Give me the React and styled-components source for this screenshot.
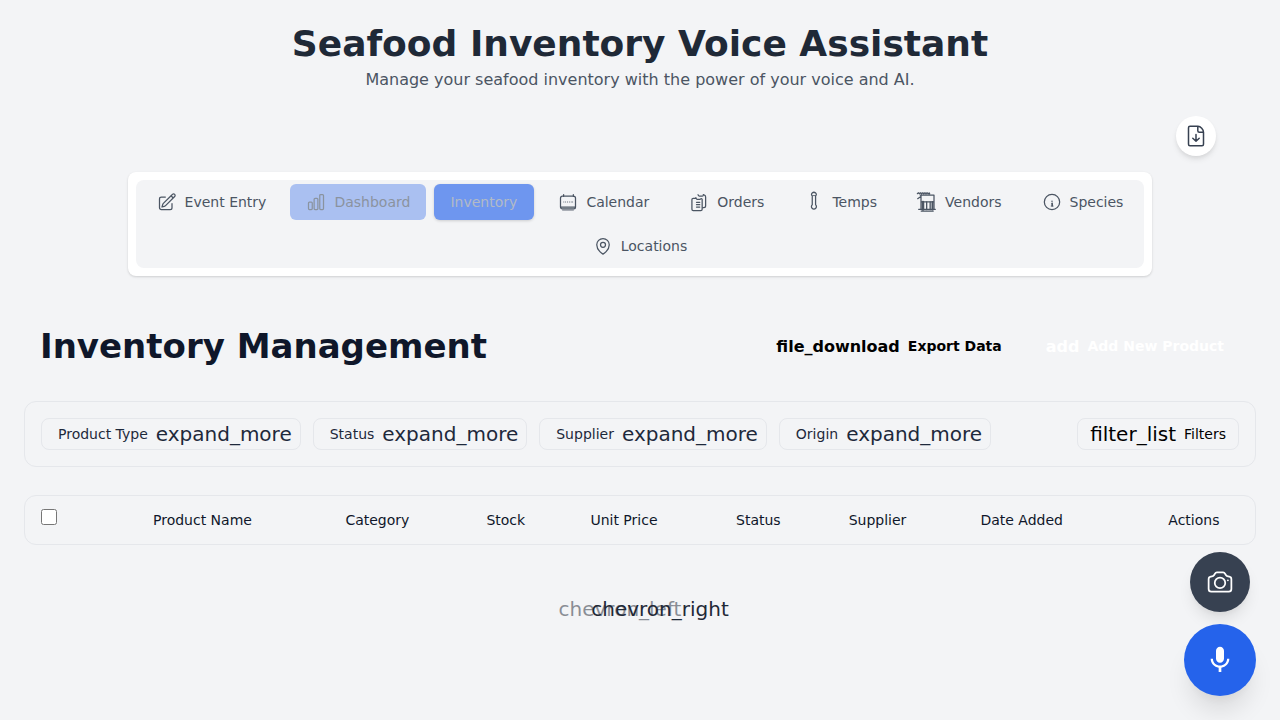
// Inventory page of the seafood voice assistant

import { styled, createGlobalStyle } from "styled-components";

const GlobalStyle = createGlobalStyle`
  *, *::before, *::after {
    box-sizing: border-box;
  }
  body {
    margin: 0;
    background-color: #f3f4f6;
    color: #1f2937;
    font-family: "DejaVu Sans", sans-serif;
    font-size: 16px;
    line-height: 24px;
  }
  h1, h2, p {
    margin: 0;
  }
  button {
    padding: 0;
    border: 0;
    background: none;
    color: inherit;
    font: inherit;
    cursor: pointer;
  }
`;

const Page = styled.div`
  padding: 24px;
`;
const Header = styled.header`
  text-align: center;
`;
const Title = styled.h1`
  font-size: 36px;
  line-height: 40px;
  font-weight: 700;
`;
const Subtitle = styled.p`
  margin-top: 4px;
  color: #4b5563;
`;
const Toolbar = styled.div`
  display: flex;
  justify-content: flex-end;
  padding: 24px 40px 16px;
`;
const RoundButton = styled.button`
  display: flex;
  align-items: center;
  justify-content: center;
  width: ${props => props.$size}px;
  height: ${props => props.$size}px;
  border-radius: 50%;
  background-color: ${props => props.$bg};
  color: ${props => props.$color};
  box-shadow: ${props => props.$shadow};
`;
const NavCard = styled.nav`
  max-width: 1024px;
  margin: 0 auto;
  padding: 8px;
  border-radius: 8px;
  background-color: white;
  box-shadow: 0 1px 3px rgba(0, 0, 0, 0.1), 0 1px 2px rgba(0, 0, 0, 0.06);
`;
const NavList = styled.div`
  display: flex;
  flex-wrap: wrap;
  justify-content: center;
  gap: 8px;
  padding: 4px;
  border-radius: 8px;
  background-color: #f3f4f6;
`;
const tabColors = {
  idle: { bg: "transparent", color: "#4b5563", shadow: "none" },
  fading: { bg: "#aac0f1", color: "#8a939f", shadow: "none" },
  active: { bg: "#6e96ef", color: "#b2bac6", shadow: "0 1px 3px rgba(0, 0, 0, 0.16)" },
};
const Tab = styled.button`
  display: flex;
  align-items: center;
  gap: 8px;
  min-width: 100px;
  padding: 8px 16px;
  border-radius: 6px;
  font-size: 14px;
  line-height: 20px;
  background-color: ${props => tabColors[props.$state].bg};
  color: ${props => tabColors[props.$state].color};
  box-shadow: ${props => tabColors[props.$state].shadow};
`;
const HeadingRow = styled.div`
  display: flex;
  align-items: center;
  justify-content: space-between;
  margin-top: 32px;
  padding: 16px;
`;
const Heading = styled.h2`
  color: #0f172a;
  font-size: 34px;
  line-height: 45px;
  font-weight: 700;
`;
const Actions = styled.div`
  display: flex;
  gap: 12px;
`;
const ActionButton = styled.button`
  display: flex;
  align-items: center;
  gap: 8px;
  height: 40px;
  padding: 0 16px;
  color: ${props => props.$color};
  font-size: 14px;
  line-height: 21px;
  font-weight: 700;
`;
const ActionIcon = styled.span`
  font-size: 16px;
  line-height: 24px;
`;
const FilterCard = styled.div`
  display: flex;
  align-items: center;
  justify-content: space-between;
  margin-top: 16px;
  padding: 16px;
  border: 1px solid #e5e7eb;
  border-radius: 12px;
`;
const FilterGroup = styled.div`
  display: flex;
  gap: 12px;
`;
const FilterButton = styled.button`
  display: flex;
  align-items: center;
  gap: 8px;
  height: 32px;
  padding: ${props => (props.$wide ? "0 12px" : "0 8px 0 16px")};
  border: 1px solid #e5e7eb;
  border-radius: 8px;
  color: ${props => (props.$wide ? "black" : "#1e293b")};
  font-size: 14px;
`;
const Symbol = styled.span`
  font-size: 20px;
`;
const TableCard = styled.div`
  margin-top: 28px;
  border: 1px solid #e5e7eb;
  border-radius: 12px;
`;
const Table = styled.table`
  width: 100%;
  border-collapse: collapse;
  color: #0f172a;
  font-size: 14px;
  line-height: 20px;
`;
const Th = styled.th`
  padding: 14px 16px;
  font-weight: 400;
  text-align: ${props => props.$align || "left"};
`;
const CheckTh = styled.th`
  width: 112px;
  padding: 13px 16px;
  text-align: left;
  vertical-align: top;
`;
const Check = styled.input`
  display: block;
  width: 16px;
  height: 16px;
  margin: 0;
`;
const Pager = styled.div`
  display: flex;
  justify-content: center;
  margin-top: 44px;
`;
const PageButton = styled.button`
  display: flex;
  align-items: center;
  justify-content: center;
  width: 40px;
  height: 40px;
  font-size: 20px;
  opacity: ${props => (props.disabled ? 0.5 : 1)};
`;
const Floating = styled.div`
  position: fixed;
  right: 24px;
  bottom: 24px;
  display: flex;
  flex-direction: column;
  align-items: center;
  gap: 12px;
`;

function Icon({ size = 20, width = 1.5, children }) {
  return (
    <svg
      width={size}
      height={size}
      viewBox="0 0 24 24"
      fill="none"
      stroke="currentColor"
      strokeWidth={width}
      strokeLinecap="round"
      strokeLinejoin="round"
      overflow="visible"
      aria-hidden="true"
    >
      {children}
    </svg>
  );
}

const icons = {
  edit: (
    <path d="m16.862 4.487 1.687-1.688a1.875 1.875 0 1 1 2.652 2.652L10.582 16.07a4.5 4.5 0 0 1-1.897 1.13L6 18l.8-2.685a4.5 4.5 0 0 1 1.13-1.897l8.932-8.931Zm0 0L19.5 7.125M18 14v4.75A2.25 2.25 0 0 1 15.75 21H5.25A2.25 2.25 0 0 1 3 18.75V8.25A2.25 2.25 0 0 1 5.25 6H10" />
  ),
  chart: (
    <path d="M3 13.125C3 12.504 3.504 12 4.125 12h2.25c.621 0 1.125.504 1.125 1.125v6.75C7.5 20.496 6.996 21 6.375 21h-2.25A1.125 1.125 0 0 1 3 19.875v-6.75ZM9.75 8.625c0-.621.504-1.125 1.125-1.125h2.25c.621 0 1.125.504 1.125 1.125v11.25c0 .621-.504 1.125-1.125 1.125h-2.25a1.125 1.125 0 0 1-1.125-1.125V8.625ZM16.5 4.125c0-.621.504-1.125 1.125-1.125h2.25C20.496 3 21 3.504 21 4.125v15.75c0 .621-.504 1.125-1.125 1.125h-2.25a1.125 1.125 0 0 1-1.125-1.125V4.125Z" />
  ),
  calendar: (
    <>
      <path d="M6.75 3v2.25M18.4 3v2.25M3 18V7.2A2.2 2.2 0 0 1 5.2 5h13.6A2.2 2.2 0 0 1 21 7.2V18M3 18h18M3 18a2.25 2.25 0 0 0 2.25 2.25h13.5A2.25 2.25 0 0 0 21 18" />
      <path d="M5.5 21.8h13" strokeWidth="0.8" />
      <path d="M7 12h.01M9.2 12h.01M11.4 12h.01M13.6 12h.01M15.8 12h.01M17.6 12h.01" strokeWidth="1.2" />
    </>
  ),
  orders: (
    <>
      <path d="M9 12.3h3.9M9 15.2h3.9M9 18h3.9" />
      <path d="M16.5 18.8h1.2a2.25 2.25 0 0 0 2.25-2.25V6.1c0-1.4-.8-2.3-1.9-2.6l-.9-.4M10.8 3.3c.5 1.2.9 1.7 1.7 1.7h3.4c.9 0 1.3-.6 1.4-1.7M8.25 7.5v-.9" />
      <path d="M8.3 7.5H5.1c-.9 0-1.6.7-1.6 1.6v11.6c0 .9.7 1.6 1.6 1.6h9.1c.9 0 1.6-.7 1.6-1.6V9.1c0-.6-.4-1.1-1-1.1-.9 0-1.2.9-2.2.9H9.8c-.9 0-.9-1.4-1.5-1.4Z" />
    </>
  ),
  temps: (
    <>
      <path d="M9.9 4.6a2.9 2.4 0 1 1 4 0v10.6a3 3 0 1 1-4 0V4.6Z" />
      <path d="M10.6 4.3h2.7" strokeWidth="1" />
    </>
  ),
  vendors: (
    <>
      <path d="M.4 2l1.3-1 1.3 1.2 1.3-1.2 1.3 1.2 1.3-1.2 1.3 1.2 1.3-1.2 1.3 1.2 1.3-1.2 1.3 1.2 1.3-1 .5 1M4 3.8h16.4v17M4.8 3.8v17M.8 8l3.4-2.4M4.8 11.8h15.6M2 20.8h20M5 22.8h14.5" />
      <path d="M7.1 12v9" strokeWidth="3.2" />
      <path d="M11.6 12v9M15.8 12v9" strokeWidth="1.6" />
      <path d="M18.6 12v9" strokeWidth="2.4" />
    </>
  ),
  species: (
    <>
      <circle cx="12" cy="12" r="9.2" />
      <path d="M12 11h.01" strokeWidth="1.8" />
      <path d="M12.2 13.6v3" strokeWidth="2" />
      <path d="M11 16.9h2.4" strokeWidth="1" />
    </>
  ),
  pin: (
    <path d="M15 10.5a3 3 0 1 1-6 0 3 3 0 0 1 6 0ZM19.5 10.5c0 7.142-7.5 11.25-7.5 11.25S4.5 17.642 4.5 10.5a7.5 7.5 0 1 1 15 0Z" />
  ),
};

const tabs = [
  { label: "Event Entry", icon: icons.edit },
  { label: "Dashboard", icon: icons.chart, state: "fading" },
  { label: "Inventory", state: "active" },
  { label: "Calendar", icon: icons.calendar },
  { label: "Orders", icon: icons.orders },
  { label: "Temps", icon: icons.temps },
  { label: "Vendors", icon: icons.vendors },
  { label: "Species", icon: icons.species },
  { label: "Locations", icon: icons.pin },
];
const filters = ["Product Type", "Status", "Supplier", "Origin"];
const columns = ["Product Name", "Category", "Stock", "Unit Price", "Status", "Supplier", "Date Added"];

function App() {
  return (
    <>
      <GlobalStyle />
      <Page>
        <Header>
          <Title>Seafood Inventory Voice Assistant</Title>
          <Subtitle>Manage your seafood inventory with the power of your voice and AI.</Subtitle>
        </Header>
        <Toolbar>
          <RoundButton
            $size={40}
            $bg="white"
            $color="#374151"
            $shadow="0 4px 6px -1px rgba(0, 0, 0, 0.1), 0 2px 4px -1px rgba(0, 0, 0, 0.06)"
            aria-label="Export"
          >
            <Icon size={24}>
              <path d="M19.5 8.2v12c0 .9-.6 1.5-1.5 1.5H6c-.9 0-1.5-.6-1.5-1.5V3.8c0-.9.6-1.5 1.5-1.5h8c2.6 0 5.5 3.2 5.5 5.9ZM13.8 2.3v4.4c0 .9.6 1.5 1.5 1.5h4.2M8.8 14.2l3.2 3.1 3.2-3.1M12 17.3v-6.8" />
            </Icon>
          </RoundButton>
        </Toolbar>
        <NavCard>
          <NavList>
            {tabs.map(tab => (
              <Tab key={tab.label} $state={tab.state || "idle"}>
                {tab.icon && <Icon>{tab.icon}</Icon>}
                {tab.label}
              </Tab>
            ))}
          </NavList>
        </NavCard>
        <main>
          <HeadingRow>
            <Heading>Inventory Management</Heading>
            <Actions>
              <ActionButton $color="black">
                <ActionIcon>file_download</ActionIcon>
                Export Data
              </ActionButton>
              <ActionButton $color="white">
                <ActionIcon>add</ActionIcon>
                Add New Product
              </ActionButton>
            </Actions>
          </HeadingRow>
          <FilterCard>
            <FilterGroup>
              {filters.map(name => (
                <FilterButton key={name}>
                  {name}
                  <Symbol>expand_more</Symbol>
                </FilterButton>
              ))}
            </FilterGroup>
            <FilterButton $wide>
              <Symbol>filter_list</Symbol>
              Filters
            </FilterButton>
          </FilterCard>
          <TableCard>
            <Table>
              <thead>
                <tr>
                  <CheckTh>
                    <Check type="checkbox" aria-label="Select all" />
                  </CheckTh>
                  {columns.map(name => (
                    <Th key={name}>{name}</Th>
                  ))}
                  <Th $align="center">Actions</Th>
                </tr>
              </thead>
            </Table>
          </TableCard>
          <Pager>
            <PageButton disabled>chevron_left</PageButton>
            <PageButton>chevron_right</PageButton>
          </Pager>
        </main>
      </Page>
      <Floating>
        <RoundButton
          $size={60}
          $bg="#374151"
          $color="white"
          $shadow="0 10px 15px -3px rgba(0, 0, 0, 0.1), 0 4px 6px -2px rgba(0, 0, 0, 0.05)"
          aria-label="Take photo"
        >
          <Icon size={28}>
            <path d="M6.827 6.175A2.31 2.31 0 0 1 5.186 7.23c-.38.054-.757.112-1.134.175C2.999 7.58 2.25 8.507 2.25 9.574V18a2.25 2.25 0 0 0 2.25 2.25h15A2.25 2.25 0 0 0 21.75 18V9.574c0-1.067-.75-1.994-1.802-2.169a47.865 47.865 0 0 0-1.134-.175 2.31 2.31 0 0 1-1.64-1.055l-.822-1.316a2.192 2.192 0 0 0-1.736-1.039 48.774 48.774 0 0 0-5.232 0 2.192 2.192 0 0 0-1.736 1.039l-.821 1.316ZM16.5 12.75a4.5 4.5 0 1 1-9 0 4.5 4.5 0 0 1 9 0ZM18.75 10.5h.008v.008h-.008V10.5Z" />
          </Icon>
        </RoundButton>
        <RoundButton
          $size={72}
          $bg="#2563eb"
          $color="white"
          $shadow="0 20px 25px -5px rgba(0, 0, 0, 0.1), 0 10px 10px -5px rgba(0, 0, 0, 0.04)"
          aria-label="Start recording"
        >
          <svg width="32" height="32" viewBox="0 0 24 24" fill="currentColor" aria-hidden="true">
            <path d="M12 14c1.66 0 2.99-1.34 2.99-3L15 5c0-1.66-1.34-3-3-3S9 3.34 9 5v6c0 1.66 1.34 3 3 3zm5.3-3c0 3-2.54 5.1-5.3 5.1S6.7 14 6.7 11H5c0 3.41 2.72 6.23 6 6.72V21h2v-3.28c3.28-.48 6-3.3 6-6.72h-1.7z" />
          </svg>
        </RoundButton>
      </Floating>
    </>
  );
}

export default App;
